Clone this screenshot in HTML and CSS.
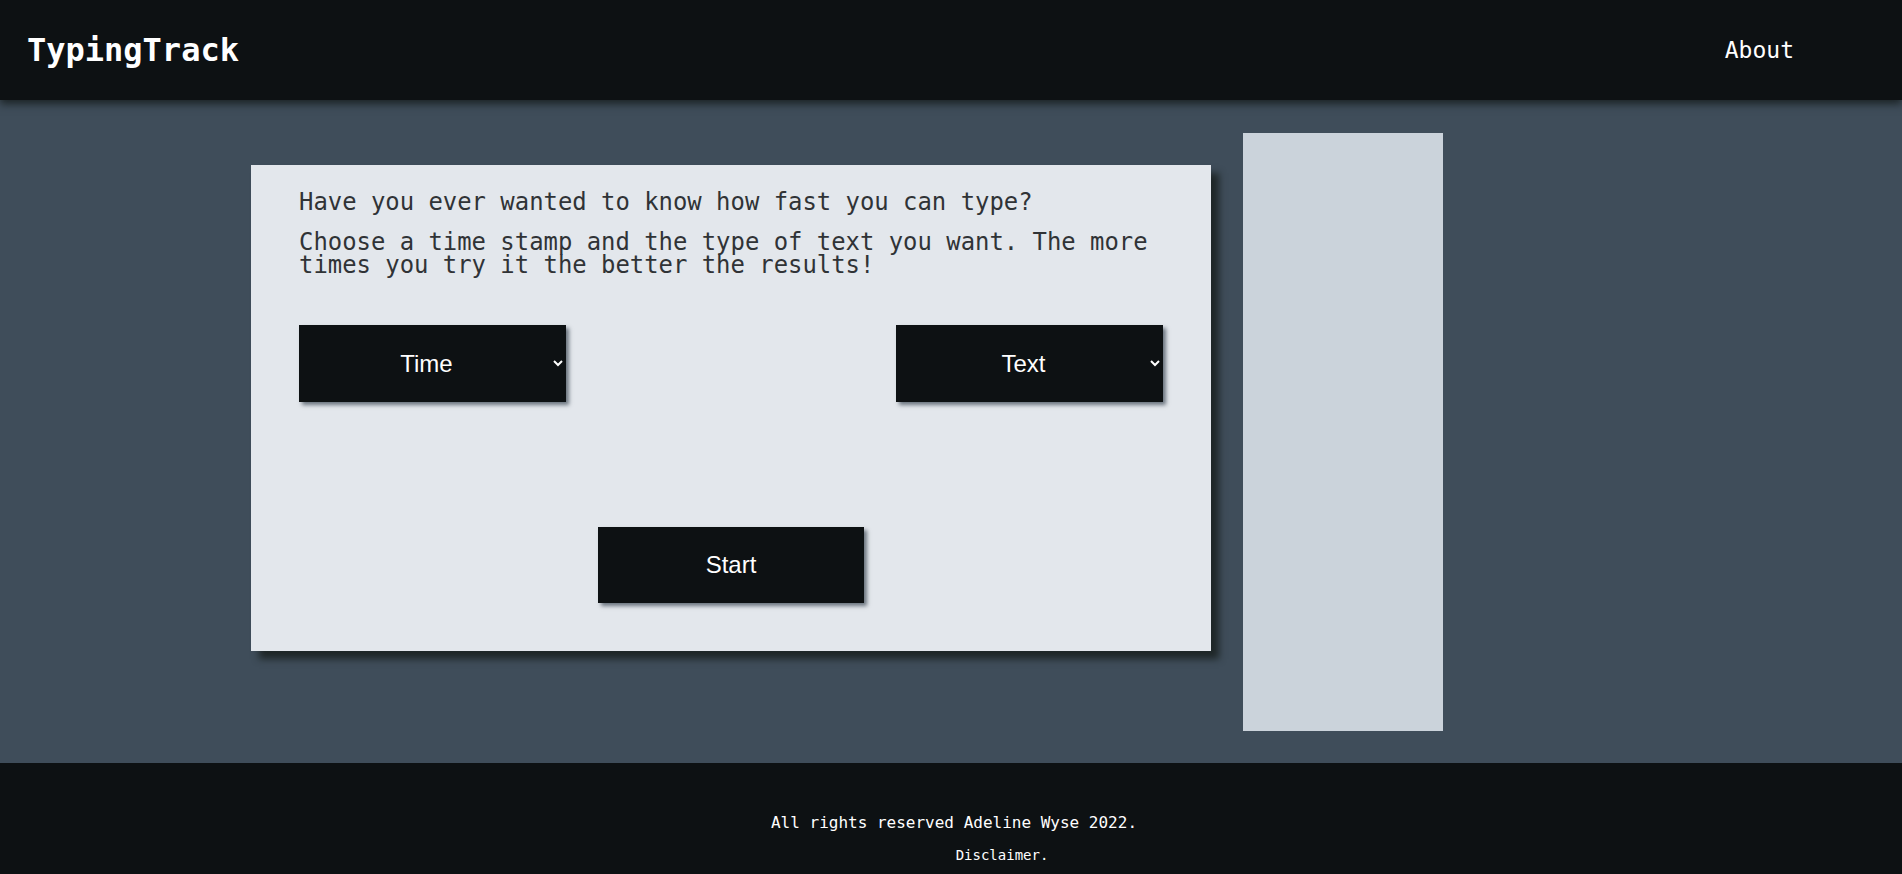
FILE: index.html
```html
<!DOCTYPE html>
<html lang="en">
<head>
<meta charset="utf-8">
<title>TypingTrack</title>
<link rel="stylesheet" href="styles.css">
</head>
<body>
<header class="topbar">
  <div class="logo">TypingTrack</div>
  <nav class="nav"><a class="nav-link" href="#">About</a></nav>
</header>
<main class="main">
  <section class="card">
    <p class="intro">Have you ever wanted to know how fast you can type?</p>
    <p class="intro intro-second">Choose a time stamp and the type of text you want. The more times you try it the better the results!</p>
    <div class="selects">
      <select class="pick">
        <option>Time</option>
        <option>30 seconds</option>
        <option>60 seconds</option>
      </select>
      <select class="pick">
        <option>Text</option>
        <option>Words</option>
        <option>Quotes</option>
      </select>
    </div>
    <div class="start-row">
      <button class="start">Start</button>
    </div>
  </section>
  <aside class="side"></aside>
</main>
<footer class="footer">
  <p class="rights">All rights reserved Adeline Wyse 2022.</p>
  <p class="disclaimer">Disclaimer.</p>
</footer>
</body>
</html>
```

FILE: styles.css
```css
html, body {
  margin: 0;
  padding: 0;
}

body {
  background: #0d1113;
  font-family: "DejaVu Sans Mono", monospace;
}

.topbar {
  position: relative;
  z-index: 2;
  height: 100px;
  background: #0d1113;
  display: flex;
  align-items: center;
  justify-content: space-between;
  padding: 0 108px 0 27px;
  box-shadow: 0 4px 8px #1c2426;
}

.logo {
  color: #ffffff;
  font-family: "DejaVu Sans Mono", monospace;
  font-weight: bold;
  font-size: 32px;
}

.nav-link {
  color: #ffffff;
  text-decoration: none;
  font-family: "DejaVu Sans Mono", monospace;
  font-size: 23px;
}

.main {
  display: flex;
  align-items: flex-start;
  gap: 32px;
  padding: 33px 0 32px 251px;
  background: #3f4d5a;
}

.card {
  width: 960px;
  box-sizing: border-box;
  margin-top: 32px;
  padding: 26px 48px 48px;
  background: #e3e7ec;
  box-shadow: 8px 8px 7px #1f2728;
}

.intro {
  margin: 0;
  font-family: "DejaVu Sans Mono", monospace;
  font-size: 23.9px;
  line-height: 22.5px;
  color: #303336;
}

.intro-second {
  margin-top: 17.5px;
}

.selects {
  display: flex;
  justify-content: space-between;
  margin-top: 48.5px;
}

.pick {
  width: 267px;
  height: 77px;
  background: #0d1113;
  color: #ffffff;
  border: none;
  border-radius: 0;
  font-family: "Liberation Sans", Arial, sans-serif;
  font-size: 24px;
  text-align: center;
  text-align-last: center;
  padding: 0 4px;
  box-shadow: 3px 3px 4px #6a747e;
  outline: none;
}

.start-row {
  display: flex;
  justify-content: center;
  margin-top: 125px;
}

.start {
  width: 266px;
  height: 76px;
  background: #0d1113;
  color: #ffffff;
  border: none;
  border-radius: 0;
  font-family: "Liberation Sans", Arial, sans-serif;
  font-size: 24px;
  box-shadow: 3px 3px 4px #6a747e;
  cursor: pointer;
}

.side {
  width: 200px;
  height: 598px;
  background: #cbd3db;
}

.footer {
  background: #0d1113;
  color: #ffffff;
  text-align: center;
  padding: 50px 0 40px;
}

.rights {
  margin: 0;
  padding-left: 6px;
  font-size: 16px;
  line-height: 20px;
}

.disclaimer {
  margin: 12px 0 0;
  padding-left: 102px;
  font-size: 14px;
  line-height: 20px;
}
```
